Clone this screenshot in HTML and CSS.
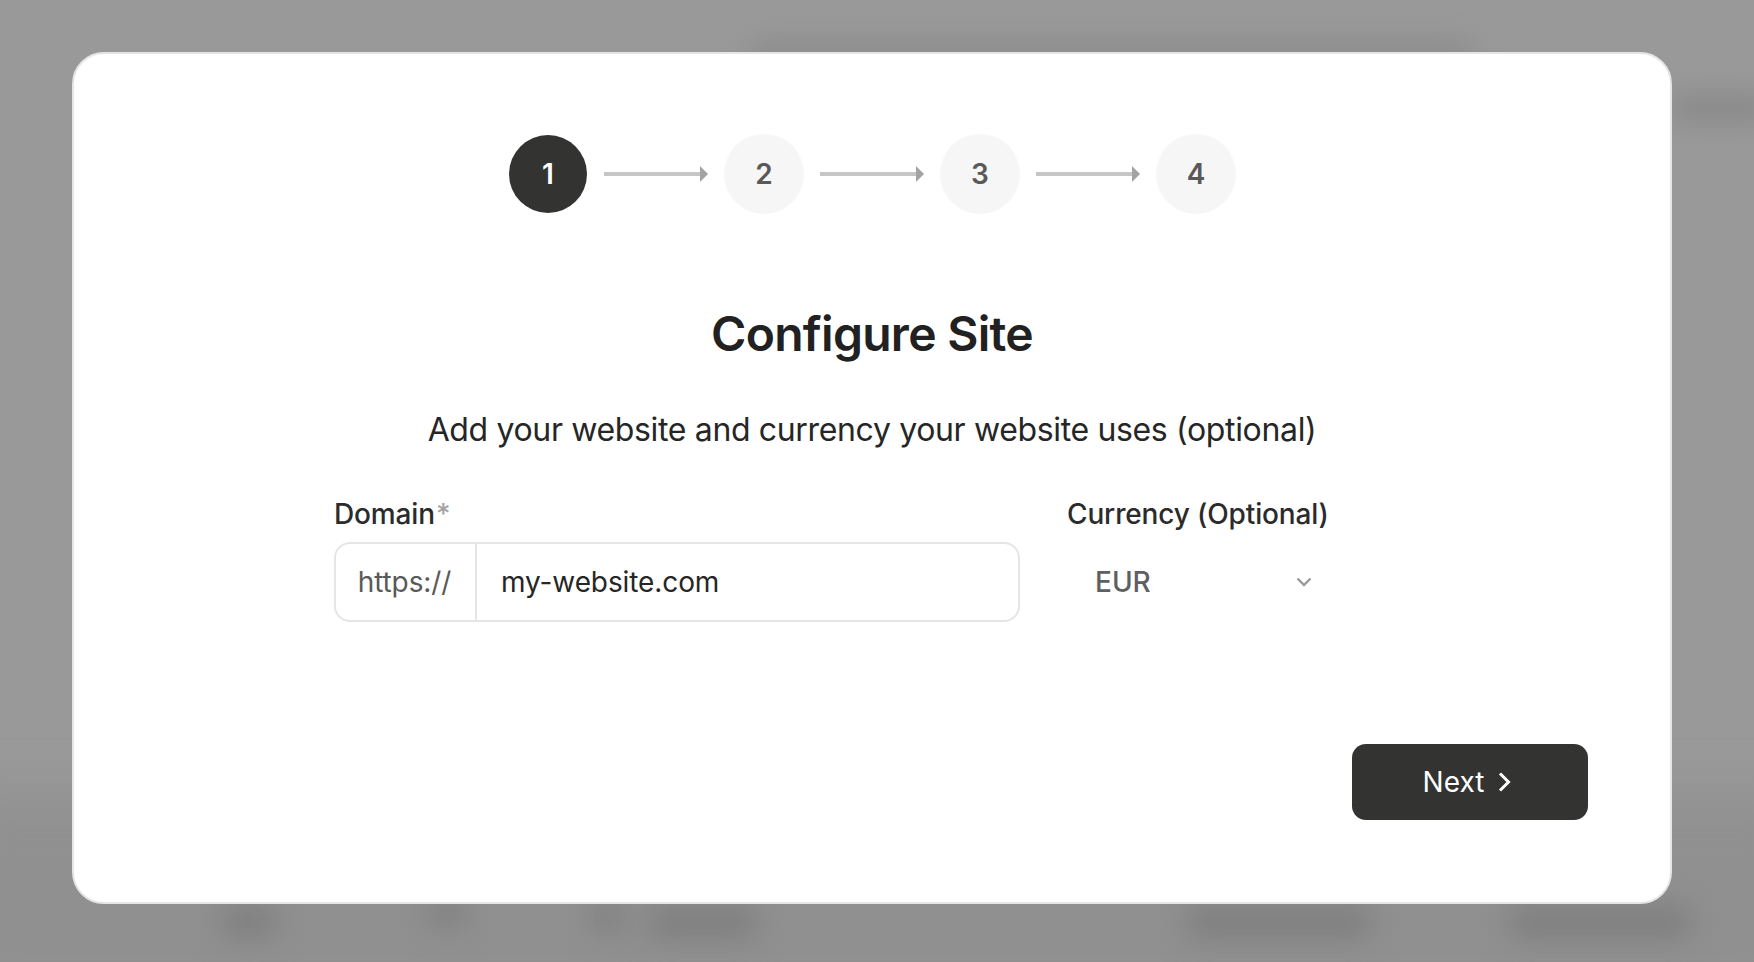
FILE: index.html
```html
<!DOCTYPE html>
<html lang="en">
<head>
<meta charset="utf-8">
<title>Configure Site</title>
<link rel="stylesheet" href="styles.css">
</head>
<body>
<div class="backdrop" aria-hidden="true">
  <span class="blob blob-top"></span>
  <span class="blob blob-right"></span>
  <span class="blob blob-band"></span>
  <span class="blob blob-b1"></span>
  <span class="blob blob-b2"></span>
  <span class="blob blob-b3"></span>
  <span class="blob blob-b4"></span>
  <span class="blob blob-b5"></span>
  <span class="blob blob-b6"></span>
</div>
<div class="overlay">
  <main class="modal">
    <ol class="steps">
      <li class="step step-active">1</li>
      <li class="arrow"><span class="arrow-line"></span><span class="arrow-head"></span></li>
      <li class="step">2</li>
      <li class="arrow"><span class="arrow-line"></span><span class="arrow-head"></span></li>
      <li class="step">3</li>
      <li class="arrow"><span class="arrow-line"></span><span class="arrow-head"></span></li>
      <li class="step">4</li>
    </ol>
    <h1 class="title">Configure Site</h1>
    <p class="subtitle">Add your website and currency your website uses (optional)</p>
    <form class="form">
      <div class="field">
        <label class="label">Domain<span class="req">*</span></label>
        <div class="input-group">
          <span class="prefix">https://</span>
          <span class="value">my-website.com</span>
        </div>
      </div>
      <div class="field">
        <label class="label">Currency (Optional)</label>
        <div class="select">
          <span class="select-value">EUR</span>
          <svg class="chevron-down" width="16" height="10" viewBox="0 0 16 10"><path d="M1.5 1.5 8 8l6.5-6.5" fill="none" stroke="#9a9a9a" stroke-width="2.4"/></svg>
        </div>
      </div>
    </form>
    <div class="actions">
      <button class="next" type="button">Next
        <svg class="chevron-right" width="13" height="20" viewBox="0 0 13 20"><path d="M2 1.5l8.5 8.5L2 18.5" fill="none" stroke="#fff" stroke-width="3"/></svg>
      </button>
    </div>
  </main>
</div>
</body>
</html>
```
FILE: styles.css
```css
* { box-sizing: border-box; }
html, body { margin: 0; height: 100%; overflow: hidden; }
body {
  background: #999999;
  font-family: Inter, "Noto Sans", sans-serif;
  color: #222222;
}
.backdrop { position: fixed; inset: 0; overflow: hidden; }
.blob { position: absolute; display: block; background: #7f7f7f; filter: blur(14px); }
.blob-top { left: 752px; top: 44px; width: 718px; height: 18px; background: #868686; }
.blob-right { left: 1672px; top: 96px; width: 98px; height: 24px; background: #868686; }
.blob-band { left: -40px; top: 795px; width: 1840px; height: 220px; background: #909090; filter: blur(24px); }
.blob-b1 { left: 222px; top: 905px; width: 54px; height: 32px; }
.blob-b2 { left: 428px; top: 900px; width: 38px; height: 26px; }
.blob-b3 { left: 590px; top: 905px; width: 34px; height: 26px; }
.blob-b4 { left: 650px; top: 905px; width: 106px; height: 34px; }
.blob-b5 { left: 1188px; top: 905px; width: 182px; height: 34px; }
.blob-b6 { left: 1510px; top: 905px; width: 180px; height: 34px; }

.overlay { position: fixed; inset: 0; padding: 52px 0 0 72px; }
.modal {
  width: 1600px;
  height: 852px;
  background: #ffffff;
  border: 2px solid #e5e5e5;
  border-radius: 32px;
  padding: 80px 82px 0;
  display: flex;
  flex-direction: column;
  align-items: center;
}
.steps {
  list-style: none;
  margin: 0 0 0 1px;
  padding: 0;
  display: flex;
  align-items: center;
  gap: 16px;
}
.step {
  width: 80px;
  height: 80px;
  border-radius: 50%;
  background: #f6f6f6;
  color: #595959;
  font-size: 28px;
  font-weight: 600;
  display: flex;
  align-items: center;
  justify-content: center;
}
.step-active { width: 78px; height: 78px; margin-right: 1px; background: #333332; color: #ffffff; }
.arrow { width: 104px; display: flex; align-items: center; }
.arrow-line { flex: 1; height: 4px; background: #c6c6c6; }
.arrow-head {
  width: 0; height: 0;
  border-left: 8px solid #a3a3a3;
  border-top: 8px solid transparent;
  border-bottom: 8px solid transparent;
}
.title {
  margin: 90px 0 0;
  font-size: 48px;
  line-height: 60px;
  font-weight: 600;
  letter-spacing: -0.72px;
  color: #212121;
}
.subtitle {
  margin: 42px 0 0;
  font-size: 32px;
  line-height: 48px;
  letter-spacing: -0.35px;
  color: #262626;
}
.form {
  width: 1076px;
  margin-top: 40px;
  display: grid;
  grid-template-columns: 686px 1fr;
  gap: 47px;
}
.field { display: flex; flex-direction: column; gap: 8px; }
.label { font-size: 28px; line-height: 40px; font-weight: 500; letter-spacing: -0.14px; color: #2b2b2b; }
.req { color: #a3a3a3; margin-left: 1px; }
.input-group {
  height: 80px;
  border: 2px solid #e5e5e5;
  border-radius: 16px;
  display: flex;
  align-items: center;
  font-size: 28px;
  letter-spacing: -0.1px;
}
.prefix {
  width: 141px;
  height: 100%;
  flex: none;
  display: flex;
  align-items: center;
  justify-content: center;
  padding-right: 2px;
  color: #595959;
  border-right: 2px solid #e5e5e5;
}
.value { padding-left: 24px; color: #262626; }
.select {
  width: 261px;
  height: 80px;
  display: flex;
  align-items: center;
  justify-content: space-between;
  padding: 0 16px 0 28px;
  font-size: 28px;
  font-weight: 500;
  color: #5f5f5f;
}
.actions { align-self: stretch; display: flex; justify-content: flex-end; margin-top: 122px; }
.next {
  width: 236px;
  height: 76px;
  border: 0;
  border-radius: 14px;
  padding: 0 6px 0 0;
  background: #333332;
  color: #ffffff;
  font: 400 28px Inter, sans-serif;
  display: flex;
  align-items: center;
  justify-content: center;
  gap: 14px;
}
```
